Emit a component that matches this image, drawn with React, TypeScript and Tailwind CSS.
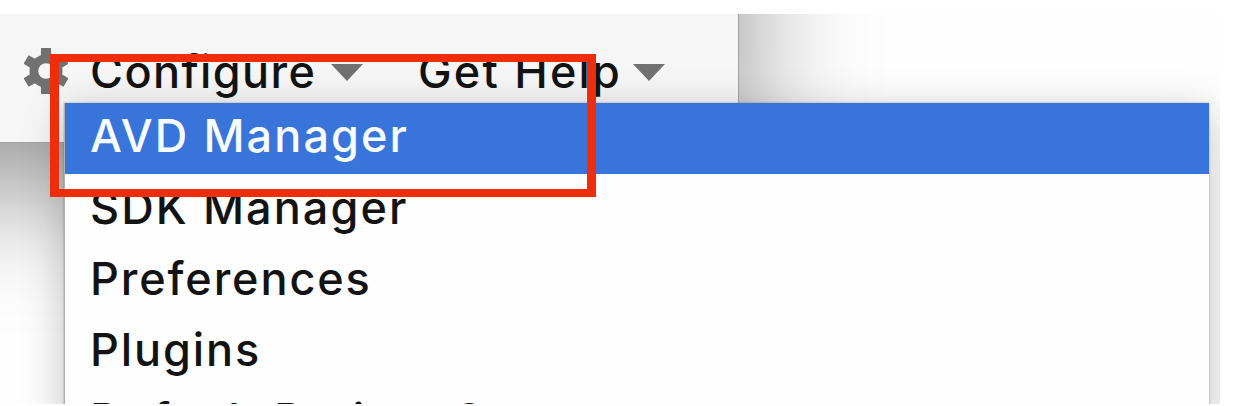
const menuItems = [
  { label: "AVD Manager", spacing: "pb-[5px] tracking-[2.1px]", active: true },
  { label: "SDK Manager", spacing: "pb-[5px] tracking-[2.1px]" },
  { label: "Preferences", spacing: "pb-[5px] tracking-[1.9px]" },
  { label: "Plugins", spacing: "pb-[5px] tracking-[1.9px]" },
  { label: "Default Project Structure...", spacing: "pb-[9px] tracking-[2.1px]" },
];

function Gear() {
  return (
    <svg className="h-[48px] w-[44px] shrink-0" viewBox="-22 -24 44 48" fill="#717171">
      {[0, 60, 120].map((angle) => (
        <path key={angle} d="M-5 -23H5L5.5 0L5 23H-5L-5.5 0Z" transform={`rotate(${angle})`} />
      ))}
      <circle r="16.5" />
      <circle r="7.8" fill="#f5f5f5" />
    </svg>
  );
}

function Arrow() {
  return (
    <svg className="mt-[3px] h-[17px] w-[32px] shrink-0" viewBox="0 0 32 17" fill="#717171">
      <path d="M0 0H32L16 17Z" />
    </svg>
  );
}

export default function App() {
  return (
    <div className="h-[406px] w-full overflow-hidden bg-white pt-[14px] font-['Inter','Liberation_Sans',sans-serif] text-[45px] leading-none font-[450] text-[#131313]">
      <main className="relative h-[390px] w-[1220px] overflow-hidden bg-[#fefefe]">
        <div className="-mt-[300px] -ml-[300px] flex h-[428.5px] w-[1039px] flex-col justify-end border-r border-b border-[#a5a5a5] bg-[#f6f6f6] shadow-[0_44px_120px_rgba(0,0,0,0.42)]">
          <header className="flex h-[128px] items-center pb-[13px] pl-[324px] whitespace-nowrap">
            <Gear />
            <button className="ml-[22px] flex items-center gap-[13px]">
              <span className="w-[228px] text-left tracking-[1.4px]">Configure</span>
              <Arrow />
            </button>
            <button className="ml-[55px] flex items-center gap-[13px]">
              <span className="w-[202px] text-left tracking-[2.2px]">Get Help</span>
              <Arrow />
            </button>
          </header>
        </div>
        <nav className="absolute top-[88.5px] left-[64px] h-[600px] w-[1145px] border-l border-[#b0b0b0] bg-[#fefefe] shadow-[0_10px_40px_rgba(0,0,0,0.24),0_0_2px_rgba(0,0,0,0.3)]">
          {menuItems.map(({ label, spacing, active }) => (
            <div
              key={label}
              className={`flex h-[71.4px] items-center pl-[25px] whitespace-nowrap ${spacing} ${active ? "bg-[#3874d9] text-[#f7fcff]" : ""}`}
            >
              {label}
            </div>
          ))}
        </nav>
        <div className="absolute top-[40px] left-[50px] h-[143px] w-[546px] border-x-9 border-y-8 border-[#ee2d0a]" />
      </main>
    </div>
  );
}
